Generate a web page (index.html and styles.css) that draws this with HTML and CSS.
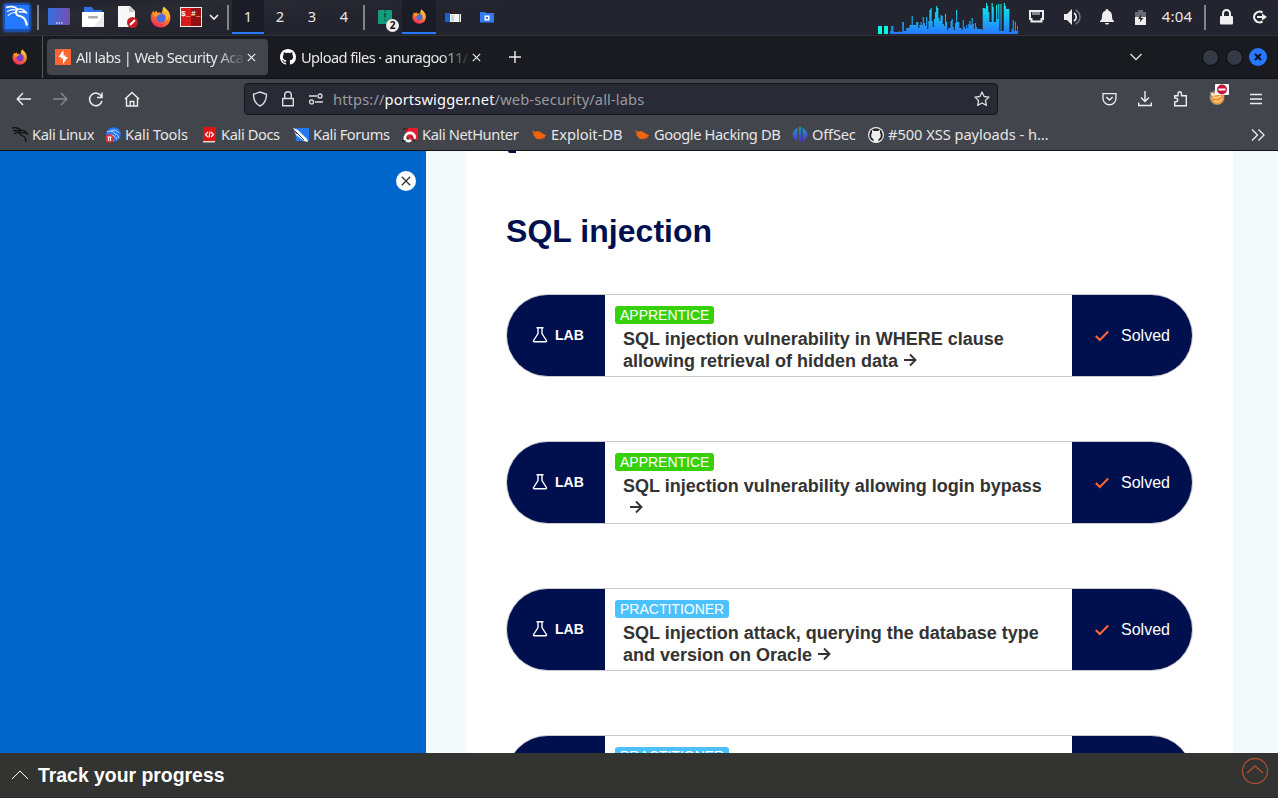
FILE: index.html
```html
<!DOCTYPE html>
<html lang="en">
<head>
<meta charset="utf-8">
<title>All labs | Web Security Academy</title>
<link rel="stylesheet" href="styles.css">
</head>
<body>
<svg class="defs" width="0" height="0">
  <defs>
    <linearGradient id="flame" x1="0.8" y1="0" x2="0.3" y2="1"><stop offset="0" stop-color="#ffe24a"/><stop offset=".45" stop-color="#ff8a20"/><stop offset="1" stop-color="#f5245d"/></linearGradient>
    <linearGradient id="load" gradientUnits="userSpaceOnUse" x1="0" y1="3" x2="0" y2="34"><stop offset="0" stop-color="#08f4e4"/><stop offset="1" stop-color="#2777ff"/></linearGradient>
    <linearGradient id="desk" x2="1"><stop offset="0" stop-color="#356ee0"/><stop offset="1" stop-color="#7450ad"/></linearGradient>
    <linearGradient id="off" x2="0" y2="1"><stop offset="0" stop-color="#159fc4"/><stop offset="1" stop-color="#5b2bd0"/></linearGradient>
    <symbol id="firefox" viewBox="0 0 22 22">
      <path d="M14 0.5c1.200 2 4 3.600 5.200 6 3.400 7.500-.8 15-8.200 15C4.500 21.500.5 16.700.8 11 .9 8.500 2 6.200 3.500 4.700l.8 2 2.200-2.200.8 2.300c2-.6 3.500-.4 4.500.3C12.500 5 12.300 2.500 14 .5z" fill="url(#flame)"/>
      <circle cx="11" cy="12" r="4.600" fill="#4f6be0"/>
      <path d="M3 7c2.500-1 5.300-.3 7.500 1.600-2.500 0-3.400 1.300-4 2.500C4.500 10.600 3.500 9 3 7z" fill="#ff9a1f"/>
      <path d="M15 6c2 3 2 6 .5 8.500 2-.7 3-2 3.300-3.500C18.500 9 17 7 15 6z" fill="#ffbd32"/>
    </symbol>
    <symbol id="firefoxtab" viewBox="0 0 22 22">
      <path d="M14 0.500c1.200 2 4 3.600 5.200 6 3.400 7.500-.8 15-8.200 15C4.500 21.500.5 16.700.8 11 .9 8.500 2 6.200 3.500 4.700l.8 2 2.200-2.200.8 2.300c2-.6 3.500-.4 4.500.3C12.500 5 12.300 2.500 14 .5z" fill="url(#flame)"/>
      <circle cx="11" cy="12" r="5" fill="#7a3bd0"/>
      <path d="M3 7c2.500-1 5.300-.3 7.500 1.600-2.500 0-3.400 1.300-4 2.500C4.500 10.600 3.500 9 3 7z" fill="#ff9a1f"/>
    </symbol>
    <symbol id="github" viewBox="0 0 16 16"><path fill="currentColor" d="M8 0C3.580 0 0 3.580 0 8c0 3.540 2.290 6.530 5.470 7.590.4.070.55-.17.55-.38 0-.19-.01-.82-.01-1.490-2.010.37-2.530-.49-2.690-.94-.09-.23-.48-.94-.82-1.130-.28-.15-.68-.52-.01-.53.63-.01 1.080.58 1.230.82.72 1.210 1.870.87 2.330.66.070-.52.28-.87.51-1.070-1.780-.2-3.640-.89-3.640-3.950 0-.87.31-1.590.82-2.150-.08-.2-.36-1.020.08-2.120 0 0 .67-.21 2.200.82.64-.18 1.320-.27 2-.27s1.360.09 2 .27c1.530-1.040 2.200-.82 2.200-.82.44 1.100.16 1.920.08 2.120.51.56.82 1.270.82 2.150 0 3.070-1.870 3.750-3.650 3.950.29.25.54.73.54 1.480 0 1.070-.01 1.930-.01 2.200 0 .21.15.46.55.38A8.010 8.010 0 0 0 16 8c0-4.420-3.580-8-8-8z"/></symbol>
    <symbol id="bug" viewBox="0 0 16 16"><path d="M1 3l3.500 2 1.500-1 3 .8 3 2 2 1 1.500 1-2 .3 1 1.500-2.500-.1 .5 1.600-2.500-.6-1 .8-3-.3-2-1.500.5-.8-2.200-.6 1-1.300L.500 6.500l2.500 .2z" fill="#f1640f"/></symbol>
    <symbol id="flask" viewBox="0 0 16 18"><path d="M4.500 1.700h7M6 2v5.500L1.600 14.500c-.3.600 0 1.200.7 1.200h11.400c.7 0 1-.6.700-1.200L10 7.500V2" fill="none" stroke="#fff" stroke-width="1.400"/></symbol>
    <symbol id="arrow" viewBox="0 0 14 14"><path d="M1 7h11M7 1.500L12.500 7 7 12.500" fill="none" stroke="#333332" stroke-width="1.900"/></symbol>
    <symbol id="check" viewBox="0 0 14 12"><path d="M.8 6l4 4L13.200 1.500" fill="none" stroke="#ff6633" stroke-width="2"/></symbol>
  </defs>
</svg>

<header class="panel">
  <svg class="kali" width="34" height="35" viewBox="0 0 34 35"><rect x="3.500" y="3.500" width="27" height="28" rx="3" fill="#1b50b0"/><rect x="5" y="5" width="24" height="24" fill="#2477ff"/><g fill="none" stroke="#fff"><path d="M6 7.500c5-1.500 9-1 11.500 1.800 4-.8 6.500.2 8.500 3.200-3-1-5-1-7.500-.5" stroke-width="1.600"/><path d="M17.500 9.500c-3 2.500-1.500 6 2 6.500 4.500.6 6.500 3.500 7.500 9.500" stroke-width="2.200"/><path d="M7 11.500c4-2 7-2 9-1.500M8 16c2-2.500 4.500-3.500 7.500-3.500" stroke-width="1.200"/></g></svg>
  <span class="sep"></span>
  <svg width="22" height="18"><rect width="22" height="17" rx="1" fill="url(#desk)"/><path d="M8 15h1.500m1 0h1.500m1 0h1.500" stroke="#fff"/></svg>
  <svg width="22" height="20"><path d="M2 0h8l2 3h8v5H2z" fill="#2f6fe4"/><path d="M0 5h22v15H0z" fill="#fff"/><path d="M12 20l10-14v14z" fill="#ebebeb"/><rect x="6" y="9" width="10" height="2.500" rx="1" fill="#aaa"/></svg>
  <svg width="21" height="22"><path d="M1 0h12l5 5v16H1z" fill="#f8f8f8"/><path d="M12 0l6 6h-6z" fill="#c9c9c9"/><circle cx="15.500" cy="16.500" r="5.500" fill="#c71c25"/><path d="M13 19l5-5" stroke="#fff" stroke-width="2"/></svg>
  <svg width="22" height="22"><use href="#firefox"/></svg>
  <span class="prompt"><b>$_</b><b>#_</b></span>
  <svg width="10" height="8"><path d="M1 2l4 4 4-4" fill="none" stroke="#eee" stroke-width="1.600"/></svg>
  <span class="sep"></span>
  <span class="ws on">1</span><span class="ws">2</span><span class="ws">3</span><span class="ws">4</span>
  <span class="sep"></span>
  <span class="archive"><svg width="14" height="15"><rect width="14" height="14" rx="1" fill="#159c7d"/><path d="M7 0v12" stroke="#0a6e55" stroke-width="1.500" stroke-dasharray="2 1"/><path d="M6 3h2v4H6z" fill="#0a5e49"/></svg><i>2</i></span>
  <span class="ws on"><svg width="15" height="15"><use href="#firefox"/></svg></span>
  <svg width="16" height="11"><path d="M0 1h5v9H0z" fill="#0b66d0"/><path d="M5 1h11v9H5z" fill="#f3f3f3"/><path d="M5 1.500h11" stroke="#222"/><path d="M6 4h3M6 6h3M6 8h3" stroke="#999" stroke-width=".7"/><path d="M14.500 2v8" stroke="#888"/></svg>
  <svg width="14" height="11"><path d="M0 0h5l1 1h8v9.500H0z" fill="#317bf3"/><rect x="4.500" y="3.500" width="5" height="5" fill="#fff"/><rect x="6" y="5" width="2" height="2" fill="#317bf3"/></svg>
  <span></span>
  <svg width="140" height="35"><path d="M0 26h4v8H0zM6 26h4v8H6z" fill="#02f5df"/><path transform="translate(-1.300 0) scale(1.110 1)" fill="url(#load)" d="M12 34V31h1V26h2v5l1 1h4v-1h1v1h2V22h1.500v9h2V28h3v-3h2V16h1v9h3V22h2v6h1v-3h1V22h1v3h1V17h1v6h1v3h1V17h1v12h1v-8h1V10h1V8h1v13h1v6h1v-8h1v-7h1V6h1V8h1v10h1v3h1V15h1v1h1v8h1v2h1V14h1v8h1v8h1v-2h2v-7h1v-2h1v8h1v3h1v-7h1V10h1v12h2v6h2v2h1V20h1v7h1v2h1v-4h1v3h1v-4h1v-3h1v4h1V18h1v6h1v5h1v-6h1v4h1v2h4v1h1V8h2l1 2V3h1V6h1v6h1v10h2V3h1V7h1v15h2V5h1v14h1V4h1v27h1V4h1v27h2V3h1V6h1v3h3v23h2v-3h1V20h1v11h1v-9h1v9h1v-5h1v8z"/></svg>
  <svg width="15" height="14"><path d="M1 1h13v8h-1.500v2.500h-10V9H1z" fill="none" stroke="#eee" stroke-width="2"/><path d="M4 2v3m2-3v3m2-3v3m2-3v3" stroke="#eee"/></svg>
  <svg width="18" height="18"><path d="M1 6h3l5-5v16l-5-5H1z" fill="#eee"/><path d="M11 5c3 2 3 6 0 8" fill="none" stroke="#eee" stroke-width="1.700"/><path d="M12.500 2c6 3 6 11 0 14" fill="none" stroke="#777981" stroke-width="1.500"/></svg>
  <svg width="14" height="16"><path d="M7 0c1 0 1.500 1 1.500 1.800C11 2.500 12 4.500 12 7c0 3 .5 4 2 5v1H0v-1c1.500-1 2-2 2-5 0-2.500 1-4.500 3.500-5.200C5.500 1 6 0 7 0zM5 14h4c0 2-4 2-4 0z" fill="#eee"/></svg>
  <svg width="11" height="15"><path d="M3 0h5v2h3v6H0V2h3z" fill="#6a6c75"/><path d="M0 7h11v8H0z" fill="#eee"/><path d="M6.500 4L3 9h2.500l-.8 3.500L8.500 8H6z" fill="#22242e"/></svg>
  <span class="clock">4:04</span>
  <span class="sep"></span>
  <svg width="13" height="16"><path d="M3 7V4.500a3.500 3.500 0 0 1 7 0V7" fill="none" stroke="#eee" stroke-width="2"/><rect y="7" width="13" height="8.500" rx="1" fill="#eee"/></svg>
  <svg width="15" height="14"><path d="M10.500 2.700A5.300 5.300 0 1 0 10.500 11.300" fill="none" stroke="#eee" stroke-width="2.200"/><path d="M5 6h5V3.500L15 7l-5 3.500V8H5z" fill="#eee"/></svg>
</header>

<nav class="tabs">
  <span class="pin"><svg width="16" height="16"><use href="#firefoxtab"/></svg></span>
  <span class="tab active"><svg width="16" height="16"><path d="M0 0h16v16H0z" fill="#ff6633"/><path d="M8.500 1L3.500 8h3l-1 1.500H8V15l5-7h-3l1-1.600H8.500z" fill="#fff"/></svg><span class="title t1">All labs | Web Security Aca</span><svg width="9" height="9"><path d="M.8.800l7.400 7.400M8.200.8L.8 8.200" stroke="#eee" stroke-width="1.200"/></svg></span>
  <span class="tab"><svg class="white" width="16" height="16"><use href="#github"/></svg><span class="title t2">Upload files · anuragoo11/</span><svg width="9" height="9"><path d="M.8.800l7.400 7.400M8.200.8L.8 8.200" stroke="#eee" stroke-width="1.200"/></svg></span>
  <svg class="new" width="12" height="12"><path d="M6 0v12M0 6h12" stroke="#eee" stroke-width="1.400"/></svg>
  <span class="winctl"><svg width="12" height="8"><path d="M.5 1L6 6.500 11.500 1" fill="none" stroke="#ddd" stroke-width="1.400"/></svg><i></i><i></i><i class="close"><svg width="8" height="8"><path d="M1 1l6 6M7 1L1 7" stroke="#101218" stroke-width="2"/></svg></i></span>
</nav>

<div class="toolbar">
  <div class="nav">
    <svg width="16" height="14"><path d="M15 7H2M7 1L1.200 7 7 13" fill="none" stroke="#eee" stroke-width="1.400"/></svg>
    <svg width="16" height="14"><path d="M1 7h13M9 1l5.800 6L9 13" fill="none" stroke="#86888d" stroke-width="1.400"/></svg>
    <svg class="low" width="16" height="16"><path d="M13.500 4.500A6.300 6.300 0 1 0 14 9M14 .5v5H9" fill="none" stroke="#eee" stroke-width="1.500"/></svg>
    <svg width="16" height="16"><path d="M1 8l7-6.500L15 8M2.500 7v8h11V7M6.200 15v-4.500h3.600V15" fill="none" stroke="#eee" stroke-width="1.400"/></svg>
    <div class="url">
      <svg width="16" height="16"><path d="M8 1l6.500 2.300C14.500 9 12.500 13 8 15 3.500 13 1.500 9 1.500 3.300z" fill="none" stroke="#ddd" stroke-width="1.400"/></svg>
      <svg width="14" height="16"><path d="M3.700 7V4a3.300 3.300 0 0 1 6.600 0v3M1.700 7.500h10.600v7.200H1.700z" fill="none" stroke="#ddd" stroke-width="1.400" stroke-linejoin="round"/></svg>
      <svg width="16" height="12"><path d="M1 3h8M7 9h8" stroke="#ddd" stroke-width="1.300"/><g fill="none" stroke="#ddd" stroke-width="1.300"><circle cx="12" cy="3" r="2"/><circle cx="3.500" cy="9" r="2"/></g></svg>
      <span class="addr">https://<b>portswigger.net</b>/web-security/all-labs</span>
      <svg width="16" height="16"><path d="M8 1l2.100 4.500 4.900.600-3.600 3.400 1 4.900L8 12l-4.400 2.400 1-4.900L1 6.100l4.900-.6z" fill="none" stroke="#ddd" stroke-width="1.300" stroke-linejoin="round"/></svg>
    </div>
    <svg width="15" height="14"><path d="M1 1.700h13v4.300c0 9-13 9-13 0z" fill="none" stroke="#eee" stroke-width="1.300"/><path d="M4.300 5l3.200 3 3.200-3" fill="none" stroke="#eee" stroke-width="1.500"/></svg>
    <svg width="14" height="16"><path d="M7 0v10M3 6.500l4 4 4-4M.7 11.500v3h12.600v-3" fill="none" stroke="#eee" stroke-width="1.400"/></svg>
    <svg width="15" height="16"><path d="M1.700 14.800V11c4 0 4-4 0-4V4.700H5V3c0-3 3.500-3 3.500 0v1.700h4.800v10.100z" fill="none" stroke="#eee" stroke-width="1.400"/></svg>
    <svg class="cookie" width="20" height="22"><circle cx="8" cy="13.500" r="7.500" fill="#8a8b8f"/><circle cx="8.500" cy="14" r="6.500" fill="#f29a38"/><path d="M1 8l5 2 1-4 1 5-5 1z" fill="#f4e6cc"/><path d="M4 13l3 1 5-2M5 17c3 2 6 0 8-2" fill="none" stroke="#fff3d0"/><rect x="6" width="14" height="11" rx="1" fill="#fff"/><circle cx="13" cy="5.500" r="5" fill="#c5163c"/><path d="M9.500 5.500h7" stroke="#fff" stroke-width="2"/></svg>
    <svg width="12" height="12"><path d="M0 1.500h12M0 6h12M0 10.500h12" stroke="#eee" stroke-width="1.300"/></svg>
  </div>
  <div class="marks">
    <span class="m1"><svg width="17" height="17"><path d="M1 2c4-1 7 0 9 2.500 3-.5 5 1 6 3.500-2-1.500-4-1.500-6-1M10 5c-3 2-1 4 2 5 2 1 3 3 3 6M2 5c3-1 5-.5 7 0M3 8c2-1.500 4-1.500 6-1" fill="none" stroke="#111" stroke-width="1.300"/></svg><em>Kali Linux</em></span>
    <span class="m2"><svg width="16" height="16"><circle cx="8.500" cy="7.500" r="7.300" fill="#2b79ed"/><path d="M2 5c5-2 7 0 8 2 2 0 3 2 4 4M6 4c4-2 6 0 8 2M6 8c3 0 4 2 6 4" fill="none" stroke="#c6e0ff"/><circle cx="4.500" cy="11.500" r="4.300" fill="#e22f35"/><path d="M2.500 10h4M3.600 10v4M5.500 10v4" stroke="#fff"/></svg><em>Kali Tools</em></span>
    <span class="m3"><svg width="13" height="16"><path d="M0 0h13v15H0z" fill="#db1515"/><path d="M0 14h12v1.500H0z" fill="#ddd"/><path d="M5 5L2.500 7.500 5 10M8 5l2.500 2.500L8 10M7 4.500l-1 6" fill="none" stroke="#fff" stroke-width="1.200"/></svg><em>Kali Docs</em></span>
    <span class="m4"><svg width="16" height="16"><path d="M2 1h14v13H3z" fill="#2479ee"/><path d="M0 1l5 2 5 5 4 4 1 3-4-1-8-6z" fill="#fff"/><path d="M2 4l9 9M0 2l4 5" stroke="#294568"/></svg><em>Kali Forums</em></span>
    <span class="m5"><svg width="16" height="16"><path d="M3 1h13v12H7z" fill="#e51e2c"/><path d="M12 12c3-6-7-9-9-2-1 4 4 5 6 3" fill="none" stroke="#fff" stroke-width="2.700"/><path d="M1 2h5M0 14h4M9 9c3 2 4 5 3 6" stroke="#171717" fill="none"/></svg><em>Kali NetHunter</em></span>
    <span class="m6"><svg width="16" height="16"><use href="#bug"/></svg><em>Exploit-DB</em></span>
    <span class="m7"><svg width="16" height="16"><use href="#bug"/></svg><em>Google Hacking DB</em></span>
    <span class="m8"><svg width="16" height="16"><path d="M5.500 1v13C-1 11-1 4 5.500 1zM10.500 1v13C17 11 17 4 10.500 1zM7 0h2v15H7z" fill="url(#off)"/></svg><em>OffSec</em></span>
    <span class="m9"><svg width="16" height="16"><circle cx="8" cy="8" r="8" fill="#eee"/><circle cx="8" cy="8" r="6.800" fill="#25272d"/><path d="M5.500 15v-3C2.500 11 3 7 4 6V3l2.300 1h3.400L12 3v3c1 1 1.500 5-1.500 6v3z" fill="#eee"/></svg><em>#500 XSS payloads - h…</em></span>
    <svg class="more" width="14" height="12"><path d="M1 .5L6.500 6 1 11.500M7.500.5L13 6l-5.500 5.500" fill="none" stroke="#eee" stroke-width="1.300"/></svg>
  </div>
</div>

<main>
  <aside><button><svg width="10" height="10"><path d="M.8.800l8.400 8.400M9.200.8L.8 9.200" stroke="#333" stroke-width="1.300"/></svg></button></aside>
  <section>
    <div class="tail"></div>
    <h2>SQL injection</h2>
    <article><div class="lab"><svg width="16" height="18"><use href="#flask"/></svg>LAB</div><div class="body"><span class="tag app">APPRENTICE</span><p>SQL injection vulnerability in WHERE clause<br>allowing retrieval of hidden data <svg width="14" height="14"><use href="#arrow"/></svg></p></div><div class="solved"><svg width="14" height="12"><use href="#check"/></svg>Solved</div></article>
    <article><div class="lab"><svg width="16" height="18"><use href="#flask"/></svg>LAB</div><div class="body"><span class="tag app">APPRENTICE</span><p>SQL injection vulnerability allowing login bypass<br><svg class="wrap" width="14" height="14"><use href="#arrow"/></svg></p></div><div class="solved"><svg width="14" height="12"><use href="#check"/></svg>Solved</div></article>
    <article><div class="lab"><svg width="16" height="18"><use href="#flask"/></svg>LAB</div><div class="body"><span class="tag prac">PRACTITIONER</span><p>SQL injection attack, querying the database type<br>and version on Oracle <svg width="14" height="14"><use href="#arrow"/></svg></p></div><div class="solved"><svg width="14" height="12"><use href="#check"/></svg>Solved</div></article>
    <article><div class="lab"></div><div class="body"><span class="tag prac">PRACTITIONER</span></div><div class="solved"></div></article>
  </section>
</main>

<footer>
  <svg width="18" height="10"><path d="M1 9l8-8 8 8" fill="none" stroke="#fff"/></svg>
  <strong>Track your progress</strong>
  <svg class="top" width="28" height="28"><circle cx="14" cy="14" r="12.500" fill="none" stroke="#ab5034" stroke-width="1.300"/><path d="M6 16l8-7 8 7" fill="none" stroke="#ab5034" stroke-width="1.500"/></svg>
</footer>
</body>
</html>
```
FILE: styles.css
```css
* { box-sizing: border-box; }
html, body { margin: 0; height: 100%; overflow: hidden; }
body { display: flex; flex-direction: column; height: 798px; font-family: "Liberation Sans", Arial, sans-serif; }
svg { flex: none; display: block; }
.defs { position: absolute; }

.panel {
  flex: none; height: 36px; padding-bottom: 1px;
  display: grid; grid-template-rows: 34px; align-items: center; justify-items: center;
  grid-template-columns: 34px 8px 34px 34px 34px 34px 26px 20px 8px 32px 32px 32px 32px 8px 34px 34px 34px 34px 1fr 140px 37px 33px 38px 29px 44px 12px 30px 37px;
  background: linear-gradient(175deg, #23242f 0 8%, #292a32 14%, #23242e 32%, #22242f);
  border-bottom: 1px solid #303137;
  color: #e8e8e8; font-family: "Noto Sans", sans-serif; font-size: 14.67px;
}
.kali { filter: drop-shadow(0 0 1px #2477ff); }
.sep { width: 2px; height: 25px; background: #83848a; }
.ws { width: 100%; height: 34px; display: flex; align-items: center; justify-content: center; padding-bottom: 2px; }
.ws.on { background: #1b1c25; border-bottom: 2px solid #2777ff; padding: 0; }
.prompt { width: 22px; height: 20px; border: 1px solid #eee; background: linear-gradient(90deg, #d81a1a 50%, #951010 50%); color: #fff; display: flex; font: bold 8px/12px "Liberation Mono", monospace; }
.prompt b { width: 10px; }
.archive { position: relative; }
.archive i { position: absolute; left: 8px; top: 9px; width: 13px; height: 13px; border-radius: 50%; background: #eee; color: #111; font: bold 10px/13px "Noto Sans", sans-serif; text-align: center; }
.clock { font-size: 15px; letter-spacing: .2px; white-space: nowrap; padding-bottom: 2px; }

.tabs { flex: none; height: 43px; display: flex; align-items: center; background: #1a1b20; border-bottom: 1px solid #111216; color: #e8e8e8; font-family: "Noto Sans", sans-serif; }
.pin { width: 43px; height: 100%; padding: 0 2px 0 0; display: flex; align-items: center; justify-content: center; border-right: 1px solid #55565a; }
.tab { height: 36px; margin-left: 4px; padding: 0 11px 0 8px; display: flex; align-items: center; width: 221px; border-radius: 4px; }
.tab.active { background: #42454c; }
.title { width: 171px; margin: 0 0 0 5px; white-space: nowrap; font-size: 14.67px; -webkit-mask-image: linear-gradient(90deg, #000 140px, transparent 170px); mask-image: linear-gradient(90deg, #000 140px, transparent 170px); }
.t1 { letter-spacing: -.55px; }
.t2 { letter-spacing: -.6px; }
.white { color: #fff; }
.tab + .tab { width: 226px; }
.new { margin-left: 11px; }
.winctl { margin-left: auto; display: flex; align-items: center; gap: 7px; padding-right: 11px; }
.winctl > svg { margin-right: 53px; }
.winctl i { width: 17px; height: 17px; border-radius: 50%; background: #333945; border: 1px solid #08090b; display: grid; place-items: center; }
.winctl .close { width: 18px; height: 18px; margin-left: -1px; background: #2777ff; border: 0; }

.toolbar { flex: none; height: 72px; background: #42454c; border-bottom: 1px solid #111217; color: #e6e6e6; font-family: "Noto Sans", sans-serif; }
.nav { height: 40px; display: flex; align-items: center; gap: 21px; padding: 0 16px; }
.nav > svg:nth-child(-n+4) { margin-right: -1px; }
.low { margin-top: 2px; }
.cookie { margin: -9px 0 0 0; }
.url { width: 754px; height: 32px; margin: 0 83px 0 84px; flex: none; display: flex; align-items: center; padding: 0 7px 0 7px; background: #282a35; border: 1px solid #15161b; border-radius: 4px; }
.url svg + svg { margin-left: 13px; }
.addr { flex: 1; margin-left: 9px; padding-bottom: 1px; color: #9a9ba0; font-size: 14.67px; letter-spacing: .13px; }
.addr b { color: #fbfbfe; font-weight: 400; }
.marks { display: flex; height: 31px; align-items: center; font-size: 14.67px; }
.marks > span { display: flex; align-items: center; gap: 4px; white-space: nowrap; }
.marks em { font-style: normal; letter-spacing: -.4px; margin-top: -2px; }
.m1 { width: 94px; padding-left: 11px; }
.m2 { width: 97px; padding-left: 11px; }
.m3 { width: 91px; padding-left: 12px; }
.m3 em { margin-left: 1px; }
.marks .m2 em { letter-spacing: -.15px; }
.m4 { width: 108px; padding-left: 11px; }
.m5 { width: 130px; padding-left: 12px; }
.m6 { width: 103px; padding-left: 11px; }
.marks .m6 em { letter-spacing: 0; }
.m7 { width: 158px; padding-left: 11px; }
.m8 { width: 76px; padding-left: 11px; }
.marks .m8 em { letter-spacing: -.2px; }
.m9 { padding-left: 11px; }
.marks .m9 em { letter-spacing: -.05px; }
.more { margin-left: auto; margin-right: 13px; }

main { flex: 1; min-height: 0; overflow: hidden; display: flex; background: #f2fafc; }
aside { width: 426px; flex: none; background: #06c; padding: 20px 10px; display: flex; justify-content: flex-end; }
aside button { width: 20px; height: 20px; border: 0; border-radius: 50%; padding: 0; background: #fff; display: grid; place-items: center; }
section { width: 767px; flex: none; margin-left: 40px; padding: 0 40px; background: #fff; height: 700px; }
.tail { width: 8px; height: 2px; margin-left: 2px; background: #00104e; border-radius: 0 0 0 4px; }
h2 { margin: 60px 0 44px; font-size: 32px; line-height: 37px; letter-spacing: .04px; color: #00104e; }
article { width: 687px; height: 83px; margin-bottom: 64px; display: flex; overflow: hidden; border: 1px solid #c8c9cb; border-radius: 42px; color: #333332; }
.lab { width: 98px; display: flex; align-items: center; padding: 0 0 1px 25px; gap: 7px; background: #00104e; color: #fff; font-weight: 700; font-size: 14px; }
.body { flex: 1; padding: 11px 0 0 10px; }
.tag { display: block; width: max-content; height: 18px; padding: 0 5px; border-radius: 3px; color: #fff; font-size: 14px; line-height: 18px; }
.app { background: #37d10c; }
.prac { background: #4cc1ff; }
.body p { margin: 4px 0 0 8px; font-size: 18px; line-height: 22px; font-weight: 700; white-space: nowrap; }
.body p svg { display: inline-block; }
.body p .wrap { margin-left: 6px; }
.solved { width: 120px; display: flex; align-items: center; padding-left: 23px; gap: 12px; background: #00104e; color: #fff; font-size: 16px; }

footer { flex: none; height: 45px; display: flex; align-items: center; padding: 0 9px 0 11px; background: #333332; border-bottom: 1px solid #292929; color: #fff; }
footer strong { margin-left: 9px; font-size: 19.4px; }
.top { margin-left: auto; margin-bottom: 8px; }
```
